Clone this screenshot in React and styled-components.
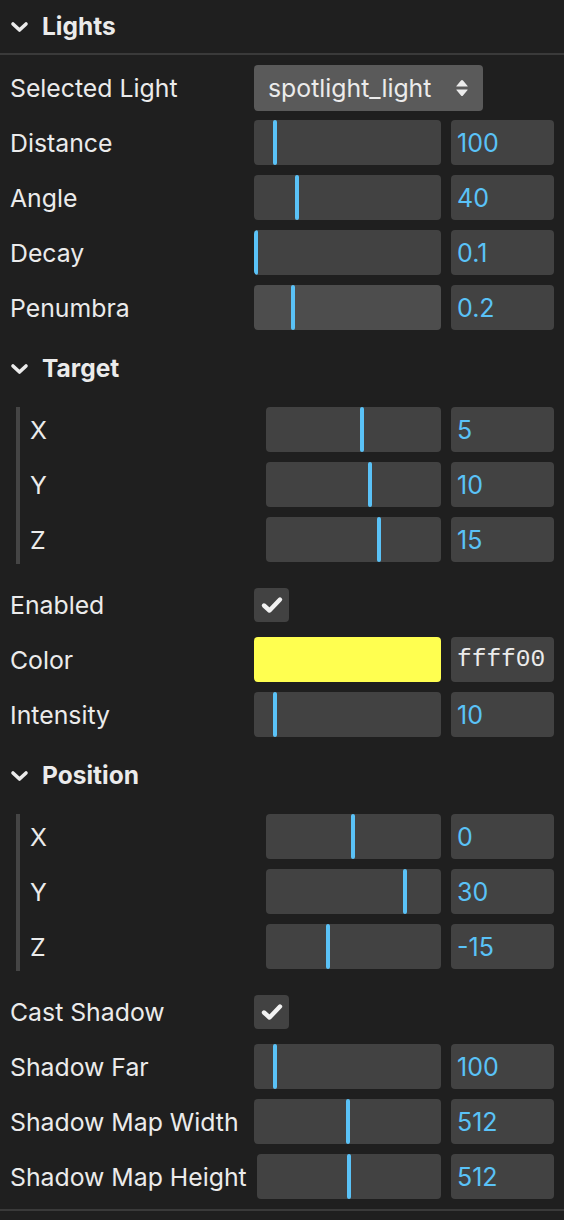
import styled, { createGlobalStyle } from "styled-components";

const COLORS = {
	bg: "#1f1f1f",
	line: "#3a3a3a",
	field: "#424242",
	fieldHover: "#4d4d4d",
	select: "#5a5a5a",
	text: "#ebebeb",
	accent: "#5ac2f7",
	yellow: "#ffff50",
};

const GlobalStyle = createGlobalStyle`
	body {
		margin: 0;
		background: ${COLORS.bg};
		font-family: Inter, "Noto Sans", sans-serif;
		color: ${COLORS.text};
	}
`;

const Chevron = () => (
	<svg width="19" height="12" viewBox="0 0 19 12">
		<polyline
			points="3,3 9.5,9 16,3"
			fill="none"
			stroke={COLORS.text}
			strokeWidth="3.6"
			strokeLinecap="round"
			strokeLinejoin="round"
		/>
	</svg>
);

const UpDown = () => (
	<svg width="14" height="18" viewBox="0 0 14 18">
		<path d="M7 1 Q7.6 1 8 1.6 L12.6 7 Q13 7.6 12.2 7.6 H1.8 Q1 7.6 1.4 7 L6 1.6 Q6.4 1 7 1 Z" fill={COLORS.text} />
		<path d="M7 17 Q7.6 17 8 16.4 L12.6 11 Q13 10.4 12.2 10.4 H1.8 Q1 10.4 1.4 11 L6 16.4 Q6.4 17 7 17 Z" fill={COLORS.text} />
	</svg>
);

const Check = () => (
	<svg width="24" height="20" viewBox="0 0 24 20">
		<polyline
			points="4,10.5 9.5,15.5 20,4.5"
			fill="none"
			stroke="#f2f2f2"
			strokeWidth="4.4"
			strokeLinecap="round"
			strokeLinejoin="round"
		/>
	</svg>
);

// a slider + number pair, the indicator placed from the value fraction
const Slider = ({ frac, value, hover }) => (
	<Controls>
		<Track hover={hover}>
			<Knob style={{ left: `calc(${frac} * (100% - 4px))` }} />
		</Track>
		<NumberBox>{value}</NumberBox>
	</Controls>
);

const Folder = ({ title, rows }) => (
	<>
		<SubTitle>
			<Chevron />
			<span>{title}</span>
		</SubTitle>
		<Nested>
			<NestedInner>
				{rows.map(r => (
					<Row key={r.label} labelWidth={226}>
						<Label>{r.label}</Label>
						<Slider frac={r.frac} value={r.value} />
					</Row>
				))}
			</NestedInner>
		</Nested>
	</>
);

const App = () => {
	return <Panel>
		<GlobalStyle />
		<Header>
			<Chevron />
			<span>Lights</span>
		</Header>

		<Content>
			<Row>
				<Label>Selected Light</Label>
				<Select>
					<span>spotlight_light</span>
					<UpDown />
				</Select>
			</Row>

			<Row><Label>Distance</Label><Slider frac={0.104} value="100" /></Row>
			<Row><Label>Angle</Label><Slider frac={0.224} value="40" /></Row>
			<Row><Label>Decay</Label><Slider frac={0} value="0.1" /></Row>
			<Row><Label>Penumbra</Label><Slider frac={0.2} value="0.2" hover /></Row>

			<Folder
				title="Target"
				rows={[
					{ label: "X", frac: 0.55, value: "5" },
					{ label: "Y", frac: 0.596, value: "10" },
					{ label: "Z", frac: 0.65, value: "15" },
				]}
			/>

			<Row>
				<Label>Enabled</Label>
				<Checkbox><Check /></Checkbox>
			</Row>

			<Row>
				<Label>Color</Label>
				<Controls>
					<Swatch color={COLORS.yellow} />
					<HexBox>ffff00</HexBox>
				</Controls>
			</Row>

			<Row><Label>Intensity</Label><Slider frac={0.104} value="10" /></Row>

			<Folder
				title="Position"
				rows={[
					{ label: "X", frac: 0.497, value: "0" },
					{ label: "Y", frac: 0.8, value: "30" },
					{ label: "Z", frac: 0.35, value: "-15" },
				]}
			/>

			<Row>
				<Label>Cast Shadow</Label>
				<Checkbox><Check /></Checkbox>
			</Row>

			<Row><Label>Shadow Far</Label><Slider frac={0.104} value="100" /></Row>
			<Row><Label>Shadow Map Width</Label><Slider frac={0.5} value="512" /></Row>
			<Row><Label>Shadow Map Height</Label><Slider frac={0.5} value="512" /></Row>
		</Content>
	</Panel>
}

export default App;


const Panel = styled.div`
	width: 564px;
	background: ${COLORS.bg};
`;

const Header = styled.div`
	height: 53px;
	display: flex;
	align-items: center;
	gap: 13px;
	padding-left: 10px;
	border-bottom: 2px solid ${COLORS.line};
	font-size: 24.5px;
	font-weight: 700;

	span { margin-top: -1px; }
`;

const SubTitle = styled(Header)`
	height: 57px;
	padding-left: 0;
	border-bottom: none;
`;

const Content = styled.div`
	display: flex;
	flex-direction: column;
	gap: 10px;
	padding: 10px 10px 10px;
	border-bottom: 2px solid ${COLORS.line};
`;

const Row = styled.div`
	display: grid;
	grid-template-columns: minmax(${props => props.labelWidth || 234}px, max-content) 1fr;
	column-gap: 10px;
	align-items: center;
	height: 45px;
`;

const Label = styled.span`
	font-size: 24.8px;
	white-space: nowrap;
	color: ${COLORS.text};
`;

const Controls = styled.div`
	display: flex;
	gap: 10px;
	height: 45px;
`;

const Track = styled.div`
	position: relative;
	flex: 1;
	background: ${props => props.hover ? COLORS.fieldHover : COLORS.field};
	border-radius: 4px;
	overflow: hidden;
`;

const Knob = styled.div`
	position: absolute;
	top: 0;
	bottom: 0;
	width: 4px;
	border-radius: 2px;
	background: ${COLORS.accent};
`;

const NumberBox = styled.div`
	width: 103px;
	display: flex;
	align-items: center;
	box-sizing: border-box;
	padding-left: 6px;
	background: ${COLORS.field};
	border-radius: 4px;
	color: ${COLORS.accent};
	font-size: 25px;
`;

const HexBox = styled(NumberBox)`
	color: ${COLORS.text};
	font-family: "Liberation Mono", monospace;
	font-size: 24.5px;
	padding-left: 6px;
	overflow: hidden;
`;

const Swatch = styled.div`
	flex: 1;
	background: ${props => props.color};
	border-radius: 4px;
`;

const Select = styled.div`
	width: 229px;
	height: 46px;
	box-sizing: border-box;
	display: flex;
	align-items: center;
	justify-content: space-between;
	padding: 0 14px 0 14px;
	background: ${COLORS.select};
	border-radius: 4px;
	font-size: 24.8px;
`;

const Checkbox = styled.div`
	width: 35px;
	height: 34px;
	display: flex;
	align-items: center;
	justify-content: center;
	background: ${COLORS.field};
	border-radius: 4px;
`;

const Nested = styled.div`
	padding: 0 0 8px 6px;
`;

const NestedInner = styled.div`
	display: flex;
	flex-direction: column;
	gap: 10px;
	padding: 0 0 2px 10px;
	border-left: 4px solid #454545;
`;
